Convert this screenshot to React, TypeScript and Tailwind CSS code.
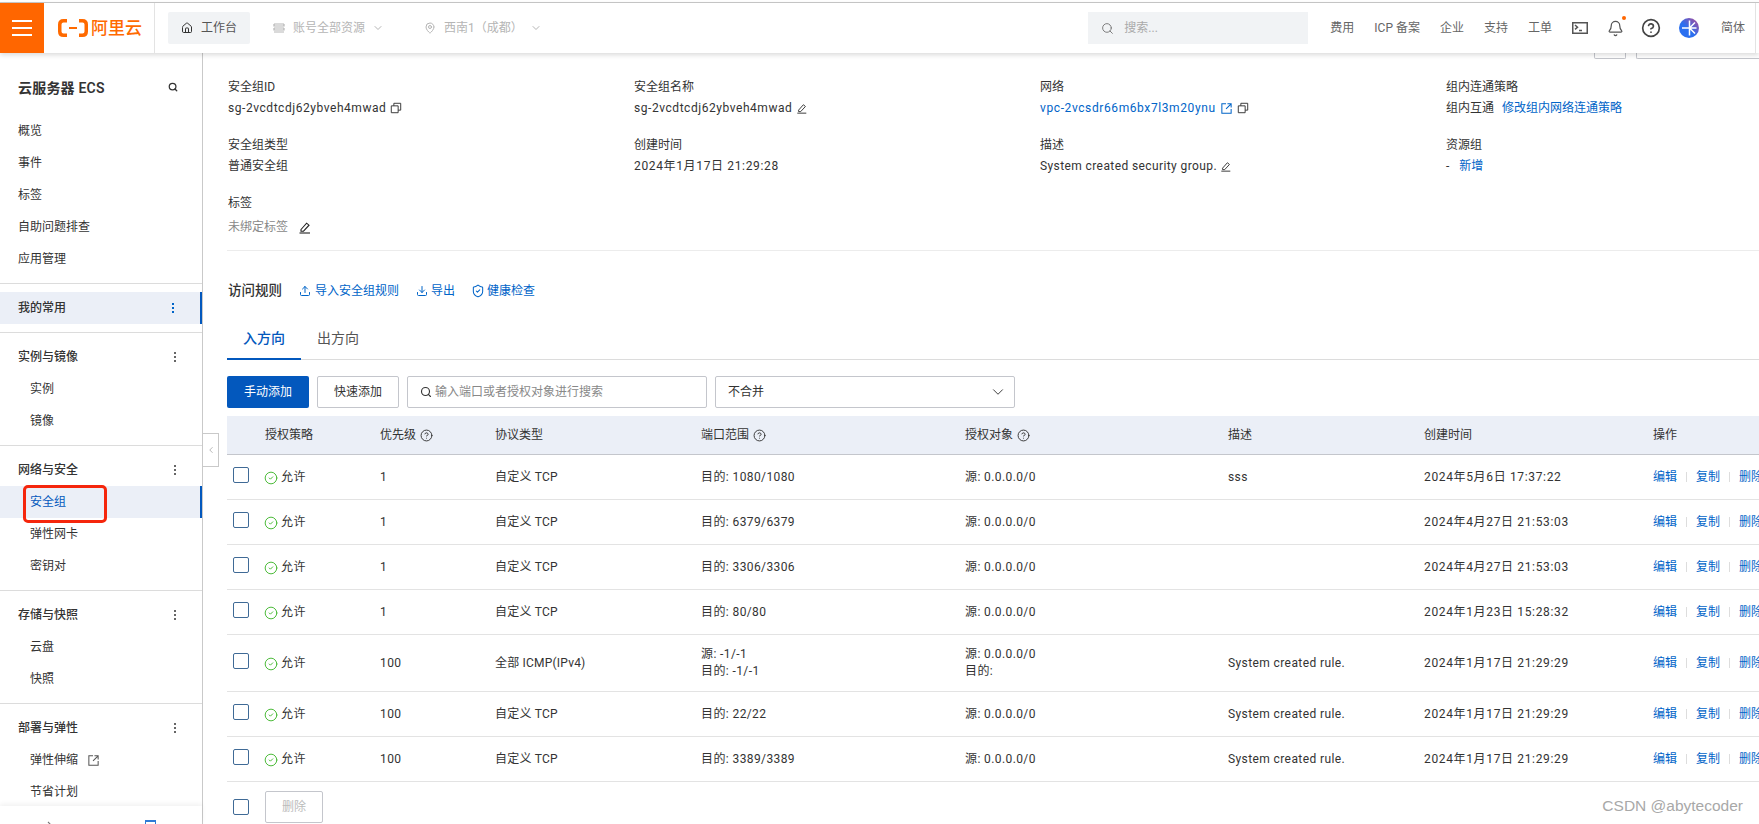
import { Bell, ChevronDown, ChevronLeft, CircleCheck, CircleHelp, Download, House, MapPin, Search, ShieldCheck, Upload } from 'lucide-react';

const EditIcon = ({ className = '' }: { className?: string }) => (
    <svg viewBox="0 0 14 14" width="14" height="14" fill="none" stroke="currentColor" strokeWidth="1.1" className={className}>
        <path d="M3 9.500 8.600 3.200l2.400 2-5.500 6H3z" />
        <path d="M1.500 13h10.500" />
    </svg>
);

const LinkOutIcon = ({ className = '' }: { className?: string }) => (
    <svg viewBox="0 0 14 14" width="14" height="14" fill="none" stroke="currentColor" strokeWidth="1.1" className={className}>
        <path d="M6.500 2H2v10h10V7.500" />
        <path d="M8 2h4v4M12 2 6.500 7.500" />
    </svg>
);

const CopyIcon = () => (
    <svg viewBox="0 0 14 14" width="12" height="12" fill="none" stroke="#333" strokeWidth="1.1" className="ml-[4px]">
        <path d="M1.500 4.500h8v8h-8z" />
        <path d="M4.500 4.500v-3h8v8h-3" />
    </svg>
);

const Dots = ({ blue = false }: { blue?: boolean }) => (
    <span className="flex flex-col gap-[2px]">
        <i className={blue ? 'w-[2px] h-[2px] bg-[#0064c8]' : 'w-[2px] h-[2px] bg-[#666]'} />
        <i className={blue ? 'w-[2px] h-[2px] bg-[#0064c8]' : 'w-[2px] h-[2px] bg-[#666]'} />
        <i className={blue ? 'w-[2px] h-[2px] bg-[#0064c8]' : 'w-[2px] h-[2px] bg-[#666]'} />
    </span>
);

const Checkbox = () => <span className="block w-4 h-4 border border-[#3f6a96] rounded-[2px] bg-white" />;

const Divider = () => <div className="border-t border-[#dcdcdc] mt-2 mb-[7px] shrink-0" />;

const NavGroup = ({ title, items }: { title: string; items: React.ReactNode[] }) => (
    <>
        <div className="flex items-center justify-between h-8 pl-[18px] pr-[26px] font-medium shrink-0 mt-[1px]">
            {title}
            <Dots />
        </div>
        {items.map((item, i) => (
            <div key={i} className="flex items-center h-8 pl-[30px] shrink-0">{item}</div>
        ))}
    </>
);

const Sidebar = () => (
    <aside className="relative w-[203px] shrink-0 border-r border-[#c9c9c9] flex flex-col bg-white">
        <div className="flex-1 min-h-0 overflow-hidden flex flex-col pt-[19px]">
            <div className="flex items-center justify-between h-8 pl-[18px] pr-6 text-sm font-semibold tracking-[0.2px] shrink-0">
                云服务器 ECS
                <Search size={10} strokeWidth={3} className="text-[#333] -mt-[3px]" />
            </div>
            <div className="mt-[11px] shrink-0">
                {['概览', '事件', '标签', '自助问题排查', '应用管理'].map((t) => (
                    <div key={t} className="flex items-center h-8 pl-[18px]">{t}</div>
                ))}
            </div>
            <Divider />
            <div className="flex items-center justify-between h-8 pl-[18px] pr-[26px] mt-[1px] bg-[#ebeff7] border-r-2 border-[#0358bd] font-medium shrink-0">
                我的常用
                <Dots blue />
            </div>
            <Divider />
            <NavGroup title="实例与镜像" items={['实例', '镜像']} />
            <Divider />
            <div className="flex items-center justify-between h-8 pl-[18px] pr-[26px] font-medium shrink-0 mt-[1px]">
                网络与安全
                <Dots />
            </div>
            <div className="relative flex items-center h-8 pl-[30px] bg-[#ebeff7] border-r-2 border-[#0358bd] text-[#0358bd] shrink-0">
                安全组
                <div className="absolute left-[23px] -top-[1px] w-[84px] h-[38px] border-[3px] border-[#f5260c] rounded-[5px]" />
            </div>
            <div className="flex items-center h-8 pl-[30px] shrink-0">弹性网卡</div>
            <div className="flex items-center h-8 pl-[30px] shrink-0">密钥对</div>
            <Divider />
            <NavGroup title="存储与快照" items={['云盘', '快照']} />
            <Divider />
            <NavGroup
                title="部署与弹性"
                items={[
                    <span className="flex items-center gap-[9px]">弹性伸缩<LinkOutIcon className="text-[#555] w-[13px] h-[13px]" /></span>,
                    '节省计划',
                ]}
            />
        </div>
        <div className="h-[18px] shrink-0 bg-white shadow-[0_-2px_5px_rgba(0,0,0,0.06)] overflow-hidden flex justify-between pl-[41px] pr-[46px] pt-[14px] z-10">
            <svg viewBox="0 0 12 12" width="12" height="12" fill="none" stroke="#777" strokeWidth="1.1"><path d="M0 6h11M7 2l4 4-4 4" /></svg>
            <span className="block w-[11px] h-3 border border-[#2f7bd6] border-t-2" />
        </div>
        <div className="absolute -right-[17px] top-[380px] w-4 h-[34px] bg-white border border-l-0 border-[#c9c9c9] flex items-center justify-center z-10">
            <ChevronLeft size={10} strokeWidth={2} className="text-[#aaa]" />
        </div>
    </aside>
);

const Field = ({ label, children }: { label: string; children: React.ReactNode }) => (
    <div className="h-[58px]">
        <div className="leading-5">{label}</div>
        <div className="flex items-center leading-5 mt-[1px]">{children}</div>
    </div>
);

const Info = () => (
    <div className="grid grid-cols-[406px_406px_406px_300px] pt-[18px] pl-px">
        <Field label="安全组ID">
            <span className="tracking-[0.55px]">sg-2vcdtcdj62ybveh4mwad</span><CopyIcon />
        </Field>
        <Field label="安全组名称">
            <span className="tracking-[0.55px]">sg-2vcdtcdj62ybveh4mwad</span><EditIcon className="ml-[4px] w-3 h-3 text-[#333]" />
        </Field>
        <Field label="网络">
            <span className="text-[#0064c8] tracking-[0.6px]">vpc-2vcsdr66m6bx7l3m20ynu</span>
            <LinkOutIcon className="ml-[4px] w-[13px] h-[13px] text-[#0064c8]" />
            <CopyIcon />
        </Field>
        <Field label="组内连通策略">
            组内互通<span className="ml-2 text-[#0064c8]">修改组内网络连通策略</span>
        </Field>
        <Field label="安全组类型">普通安全组</Field>
        <Field label="创建时间"><span className="tracking-[0.65px]">2024年1月17日 21:29:28</span></Field>
        <Field label="描述">
            <span className="tracking-[0.4px]">System created security group.</span><EditIcon className="ml-[3px] w-3 h-3 text-[#333]" />
        </Field>
        <Field label="资源组">
            -<span className="ml-[10px] text-[#0064c8]">新增</span>
        </Field>
        <div className="h-[57px]">
            <div className="leading-5">标签</div>
            <div className="flex items-center leading-5 mt-[4px] text-[#888]">
                未绑定标签 <EditIcon className="ml-[10px] text-[#222]" />
            </div>
        </div>
    </div>
);

const Toolbar = () => (
    <div className="flex gap-2 h-8 items-stretch">
        <button className="w-[82px] bg-[#0358bd] text-white rounded-[2px]">手动添加</button>
        <button className="w-[82px] border border-[#c4c6cc] rounded-[2px] bg-white text-[#333]">快速添加</button>
        <div className="w-[300px] border border-[#c4c6cc] rounded-[2px] flex items-center pl-3 text-[#888]">
            <Search size={12} strokeWidth={2.25} className="text-[#333] mr-[3px]" />
            输入端口或者授权对象进行搜索
        </div>
        <div className="w-[300px] border border-[#c4c6cc] rounded-[2px] flex items-center justify-between pl-3 pr-[7px]">
            不合并
            <ChevronDown size={18} strokeWidth={1.25} className="text-[#333]" />
        </div>
    </div>
);

const gridCols = 'grid grid-cols-[38px_115px_115px_206px_264px_263px_196px_229px_110px] items-center';

const HeadLabel = ({ text, help = false }: { text: string; help?: boolean }) => (
    <span className="flex items-center gap-[4px]">
        {text}
        {help && <CircleHelp size={13} strokeWidth={1.75} className="text-[#333]" />}
    </span>
);

type Rule = { pri: string; proto: string; port: string[]; auth: string[]; desc: string; time: string; tall?: boolean };

const rules: Rule[] = [
    { pri: '1', proto: '自定义 TCP', port: ['目的: 1080/1080'], auth: ['源: 0.0.0.0/0'], desc: 'sss', time: '2024年5月6日 17:37:22' },
    { pri: '1', proto: '自定义 TCP', port: ['目的: 6379/6379'], auth: ['源: 0.0.0.0/0'], desc: '', time: '2024年4月27日 21:53:03' },
    { pri: '1', proto: '自定义 TCP', port: ['目的: 3306/3306'], auth: ['源: 0.0.0.0/0'], desc: '', time: '2024年4月27日 21:53:03' },
    { pri: '1', proto: '自定义 TCP', port: ['目的: 80/80'], auth: ['源: 0.0.0.0/0'], desc: '', time: '2024年1月23日 15:28:32' },
    { pri: '100', proto: '全部 ICMP(IPv4)', port: ['源: -1/-1', '目的: -1/-1'], auth: ['源: 0.0.0.0/0', '目的:'], desc: 'System created rule.', time: '2024年1月17日 21:29:29', tall: true },
    { pri: '100', proto: '自定义 TCP', port: ['目的: 22/22'], auth: ['源: 0.0.0.0/0'], desc: 'System created rule.', time: '2024年1月17日 21:29:29' },
    { pri: '100', proto: '自定义 TCP', port: ['目的: 3389/3389'], auth: ['源: 0.0.0.0/0'], desc: 'System created rule.', time: '2024年1月17日 21:29:29' },
];

const Row = ({ rule }: { rule: Rule }) => (
    <div className={`${gridCols} ${rule.tall ? 'h-[57px]' : 'h-[45px]'} border-b border-[#e3e3e3] tracking-[0.4px]`}>
        <span className="pl-[6px] -mt-[4px]"><Checkbox /></span>
        <span className="flex items-center gap-[3px]">
            <CircleCheck size={14} strokeWidth={1.6} className="text-[#3fb62c] mt-[2px] -ml-px" />
            允许
        </span>
        <span>{rule.pri}</span>
        <span className="tracking-[0.2px]">{rule.proto}</span>
        <div className="leading-[17px]">{rule.port.map((t) => <div key={t}>{t}</div>)}</div>
        <div className="leading-[17px]">{rule.auth.map((t) => <div key={t}>{t}</div>)}</div>
        <span>{rule.desc}</span>
        <span className="tracking-[0.65px]">{rule.time}</span>
        <span className="flex items-center text-[#0064c8] whitespace-nowrap tracking-normal">
            编辑<i className="w-px h-[10px] bg-[#ddd] mx-[9px]" />复制<i className="w-px h-[10px] bg-[#ddd] mx-[9px]" />删除
        </span>
    </div>
);

const RulesTable = () => (
    <div className="w-[1536px] mt-2">
        <div className={`${gridCols} h-[39px] bg-[#ebeff7] border-b border-[#c4c6cc]`}>
            <span />
            <HeadLabel text="授权策略" />
            <HeadLabel text="优先级" help />
            <HeadLabel text="协议类型" />
            <HeadLabel text="端口范围" help />
            <HeadLabel text="授权对象" help />
            <HeadLabel text="描述" />
            <HeadLabel text="创建时间" />
            <HeadLabel text="操作" />
        </div>
        {rules.map((r, i) => <Row key={i} rule={r} />)}
        <div className="flex items-center h-[50px] pl-[6px]">
            <Checkbox />
            <button className="ml-4 w-[58px] h-8 border border-[#c4c6cc] rounded-[2px] text-[#bbb]">删除</button>
        </div>
    </div>
);

const Header = () => (
    <header className="relative z-20 flex items-center h-[50px] shrink-0 bg-white shadow-[0_2px_5px_rgba(0,0,0,0.15)] text-[#666]">
        <div className="w-11 h-full bg-[#ff6600] flex flex-col items-center justify-center gap-[5px]">
            <i className="w-5 h-[2px] bg-white" />
            <i className="w-5 h-[2px] bg-white" />
            <i className="w-5 h-[2px] bg-white" />
        </div>
        <div className="w-[111px] h-full border-r border-[#e3e3e3] flex items-center pl-[14px] text-[#ff6a00]">
            <svg viewBox="0 0 30 18" width="30" height="18" fill="none" stroke="#ff6a00" strokeWidth="3.5">
                <path d="M9 1.750H5.500Q1.750 1.750 1.750 5.500v7Q1.750 16.250 5.500 16.250H9M21 1.750h3.500Q28.250 1.750 28.250 5.500v7Q28.250 16.250 24.500 16.250H21" />
                <path d="M11 9h8" strokeWidth="2" />
            </svg>
            <span className="ml-[3px] text-[17px] leading-none font-medium whitespace-nowrap">阿里云</span>
        </div>
        <div className="ml-[13px] w-[82px] h-8 bg-[#f1f3f5] rounded-[2px] flex items-center justify-center gap-[8px] text-[#555]">
            <House size={12} strokeWidth={2} className="text-[#333]" />
            工作台
        </div>
        <div className="ml-[23px] flex items-center text-[#b5b5b5]">
            <svg viewBox="0 0 12 12" width="12" height="12" fill="none" stroke="currentColor" strokeWidth="1.2"><path d="M1 2h10M1 6h10M1 10h10M1 2v2h10V2M1 6v2h10V6" /></svg>
            <span className="ml-2">账号全部资源</span>
            <ChevronDown size={12} strokeWidth={2} className="ml-[7px]" />
        </div>
        <div className="ml-[40px] flex items-center text-[#b5b5b5]">
            <MapPin size={12} strokeWidth={2} />
            <span className="ml-2">西南1（成都）</span>
            <ChevronDown size={12} strokeWidth={2} className="ml-[7px]" />
        </div>
        <div className="ml-auto flex items-center">
            <div className="w-[220px] h-8 bg-[#f1f3f5] flex items-center pl-[13px] text-[#aaa]">
                <Search size={13} strokeWidth={1.75} className="text-[#777] mr-[10px]" />
                搜索...
            </div>
            <nav className="ml-[22px] flex items-center gap-5 whitespace-nowrap">
                <span>费用</span>
                <span>ICP 备案</span>
                <span>企业</span>
                <span>支持</span>
                <span>工单</span>
            </nav>
            <svg viewBox="0 0 16 12" width="16" height="12" fill="none" stroke="#555" strokeWidth="1.500" className="ml-5"><path d="M.750.750h14.500v10.500H.750zM3 3l2.500 2.200L3 7.400M7 8.500h3" /></svg>
            <span className="relative ml-[19px]">
                <Bell size={17} strokeWidth={1.75} className="text-[#555]" />
                <i className="absolute -right-[2px] -top-[4px] w-1 h-1 rounded-full bg-[#ff6600]" />
            </span>
            <CircleHelp size={20} strokeWidth={2} className="ml-[17px] text-[#444]" />
            <svg viewBox="0 0 20 20" width="20" height="20" className="ml-[18px]">
                <defs>
                    <linearGradient id="ava" x1="0" y1="1" x2="1" y2="0">
                        <stop offset="0.45" stopColor="#2a6ff0" />
                        <stop offset="1" stopColor="#b8468f" />
                    </linearGradient>
                </defs>
                <circle cx="10" cy="10" r="10" fill="url(#ava)" />
                <path d="M3 10h10M10.500 2.500v15M10.500 10 16 4.500M10.500 10 16 15.500M10.500 10h7" stroke="#fff" strokeWidth="1.500" fill="none" />
            </svg>
            <span className="ml-[22px] mr-[14px]">简体</span>
        </div>
        <i className="absolute right-[3px] top-0 h-full w-px bg-[#e3e3e3]" />
    </header>
);

export default function App() {
    return (
        <div className="h-[824px] w-full overflow-hidden flex flex-col bg-white pt-[2px] text-xs text-[#333] font-[Roboto,'Noto_Sans_CJK_SC',sans-serif]">
            <div className="border-t border-[#c9c9c9] shrink-0" />
            <Header />
            <div className="relative flex flex-1 min-h-0">
                <Sidebar />
                <main className="flex-1 min-w-0 overflow-hidden pl-6 relative">
                    <div className="flex justify-end gap-[10px] h-[6px] -mr-[1px]">
                        <span className="w-8 border border-t-0 border-[#c4c6cc] rounded-b-[2px]" />
                        <span className="w-[124px] border border-t-0 border-r-0 border-[#c4c6cc] rounded-bl-[2px]" />
                    </div>
                    <Info />
                    <div className="border-t border-[#ececec]" />
                    <div className="flex items-center h-5 mt-[30px] pl-px">
                        <span className="text-[13.500px] font-medium">访问规则</span>
                        <span className="ml-[17px] flex items-center text-[#0064c8]"><Upload size={12} strokeWidth={2} className="mr-[4px]" />导入安全组规则</span>
                        <span className="ml-[17px] flex items-center text-[#0064c8]"><Download size={12} strokeWidth={2} className="mr-[3px]" />导出</span>
                        <span className="ml-[16px] flex items-center text-[#0064c8]"><ShieldCheck size={14} strokeWidth={1.75} className="mr-[2px]" />健康检查</span>
                    </div>
                    <div className="flex h-[59px] items-end mt-0 border-b border-[#dcdcdc] text-sm">
                        <div className="w-[74px] h-[41px] pb-[2px] flex items-center justify-center border-b-2 border-[#0358bd] text-[#0358bd] font-medium -mb-px">入方向</div>
                        <div className="ml-4 h-[41px] pb-[2px] flex items-center text-[#555]">出方向</div>
                    </div>
                    <div className="mt-4"><Toolbar /></div>
                    <RulesTable />
                    <div className="absolute right-[16px] top-[743px] text-[15.500px] text-[#a8a8a8] font-['Liberation_Sans',sans-serif] whitespace-nowrap">CSDN @abytecoder</div>
                </main>
            </div>
        </div>
    );
}
